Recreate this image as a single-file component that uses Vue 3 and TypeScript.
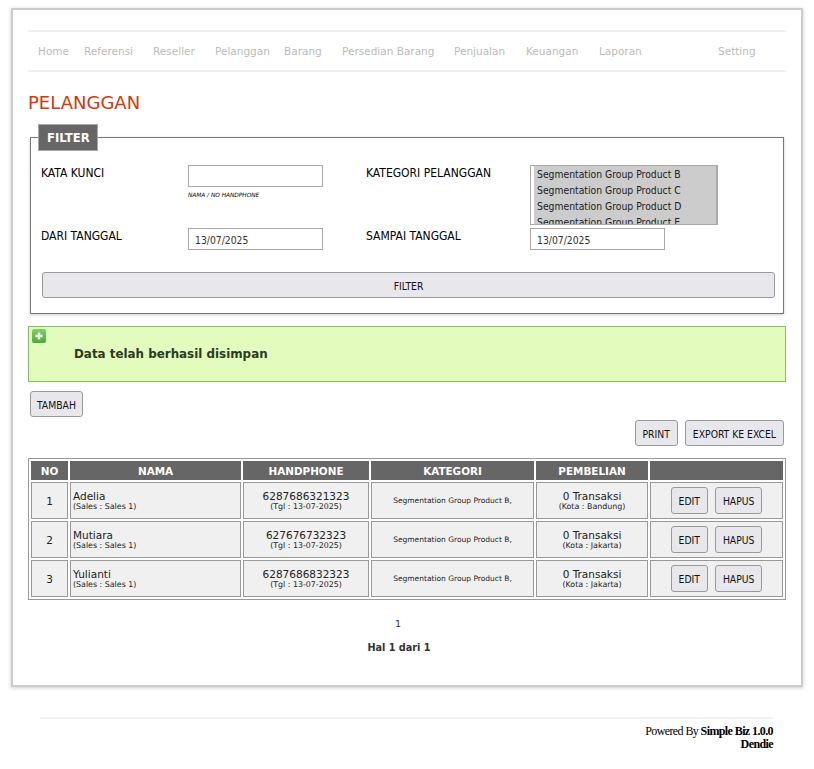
<script setup lang="ts">
type Customer = {
  no: number;
  nama: string;
  phone: string;
  kota: string;
};

const menu = [
  { label: 'Home', width: 46 },
  { label: 'Referensi', width: 69 },
  { label: 'Reseller', width: 62 },
  { label: 'Pelanggan', width: 69 },
  { label: 'Barang', width: 58 },
  { label: 'Persedian Barang', width: 112 },
  { label: 'Penjualan', width: 72 },
  { label: 'Keuangan', width: 73 },
  { label: 'Laporan', width: 119 },
  { label: 'Setting', width: 60 },
];

const categories = ['B', 'C', 'D', 'E'].map((c) => `Segmentation Group Product ${c}`);

const customers: Customer[] = [
  { no: 1, nama: 'Adelia', phone: '6287686321323', kota: 'Bandung' },
  { no: 2, nama: 'Mutiara', phone: '627676732323', kota: 'Jakarta' },
  { no: 3, nama: 'Yulianti', phone: '6287686832323', kota: 'Jakarta' },
];
</script>

<template>
  <div class="page">
    <div class="box">
      <nav class="menu">
        <a v-for="m in menu" :key="m.label" :style="{ width: m.width + 'px' }">{{ m.label }}</a>
      </nav>

      <h1>PELANGGAN</h1>

      <fieldset class="filter">
        <legend>FILTER</legend>
        <div class="form-grid">
          <label>KATA KUNCI</label>
          <div class="keyword">
            <input type="text" />
            <small>NAMA / NO HANDPHONE</small>
          </div>
          <label>KATEGORI PELANGGAN</label>
          <div class="list">
            <div v-for="c in categories" :key="c">{{ c }}</div>
          </div>
          <label>DARI TANGGAL</label>
          <input type="text" value="13/07/2025" />
          <label>SAMPAI TANGGAL</label>
          <input type="text" value="13/07/2025" />
        </div>
        <button class="btn wide">FILTER</button>
      </fieldset>

      <div class="message">
        <span class="msg-icon">
          <svg width="14" height="14" viewBox="0 0 14 14">
            <defs>
              <linearGradient id="msg-green" x1="0" y1="0" x2="0" y2="1">
                <stop offset="0" stop-color="#82cf68" />
                <stop offset="1" stop-color="#4fa83c" />
              </linearGradient>
            </defs>
            <rect width="14" height="14" rx="2" fill="url(#msg-green)" />
            <path d="M7 3.5v7M3.5 7h7" stroke="#eefbe4" stroke-width="2.4" />
          </svg>
        </span>
        Data telah berhasil disimpan
      </div>

      <div class="add-row"><button class="btn">TAMBAH</button></div>
      <div class="tools">
        <button class="btn">PRINT</button>
        <button class="btn">EXPORT KE EXCEL</button>
      </div>

      <table class="grid">
        <colgroup>
          <col style="width: 37px" />
          <col style="width: 171px" />
          <col style="width: 126px" />
          <col style="width: 163px" />
          <col style="width: 112px" />
          <col />
        </colgroup>
        <thead>
          <tr>
            <th>NO</th>
            <th>NAMA</th>
            <th>HANDPHONE</th>
            <th>KATEGORI</th>
            <th>PEMBELIAN</th>
            <th></th>
          </tr>
        </thead>
        <tbody>
          <tr v-for="c in customers" :key="c.no">
            <td class="center no">{{ c.no }}</td>
            <td class="name">
              {{ c.nama }}
              <small>(Sales : Sales 1)</small>
            </td>
            <td class="center">
              {{ c.phone }}
              <small>(Tgl : 13-07-2025)</small>
            </td>
            <td class="center cat">Segmentation Group Product B,</td>
            <td class="center">
              0 Transaksi
              <small>(Kota : {{ c.kota }})</small>
            </td>
            <td class="center actions">
              <button class="btn">EDIT</button>
              <button class="btn">HAPUS</button>
            </td>
          </tr>
        </tbody>
      </table>

      <div class="pager">1</div>
      <div class="pager-info">Hal 1 dari 1</div>
    </div>

    <footer>
      Powered By <b>Simple Biz 1.0.0</b><br />
      <b>Dendie</b>
    </footer>
  </div>
</template>

<style>
html,
body {
  background: #fff;
}
</style>

<style scoped>
.page {
  padding: 8px 11px 0;
  font-family: "DejaVu Sans", Verdana, sans-serif;
  color: #222;
}
.box {
  width: 792px;
  height: 679px;
  box-sizing: border-box;
  border: 2px solid #ccc;
  box-shadow: 0 1px 4px rgba(0, 0, 0, 0.2);
  padding: 20px 15px 0;
  background: #fff;
}
.menu {
  display: flex;
  height: 38px;
  align-items: center;
  border-top: 2px solid #f0f0f0;
  border-bottom: 2px solid #f0f0f0;
  padding-left: 10px;
  font-size: 10.5px;
  color: #bbb;
}
.menu a {
  flex: none;
  white-space: nowrap;
}
h1 {
  margin: 20px 0 0;
  font-size: 18px;
  line-height: 22px;
  font-weight: normal;
  color: #d4380d;
}
.filter {
  margin: 10px 2px 0;
  padding: 0 8px 0 10px;
  height: 190px;
  box-sizing: border-box;
  border: 1px solid #777;
  box-shadow: 0 1px 3px rgba(0, 0, 0, 0.2);
}
legend {
  margin-left: -3px;
  padding: 0 7px 0 8px;
  height: 27px;
  line-height: 27px;
  box-sizing: border-box;
  background: #666;
  border: 1px solid #aaa;
  color: #fff;
  font-size: 11.7px;
  font-weight: bold;
}
.form-grid {
  display: grid;
  grid-template-columns: 147px 178px 164px 1fr;
  grid-template-rows: 60px 25px;
  row-gap: 3px;
  margin-top: 14px;
  font-family: "DejaVu Sans Condensed", "DejaVu Sans", Verdana, sans-serif;
  font-stretch: condensed;
  font-size: 12px;
  color: #000;
}
.form-grid label {
  padding-top: 1px;
  line-height: 14px;
}
.form-grid input {
  width: 135px;
  height: 22px;
  box-sizing: border-box;
  border: 1px solid #aaa;
  padding: 3px 6px 1px;
  font-family: "DejaVu Sans Condensed", "DejaVu Sans", Verdana, sans-serif;
  font-stretch: condensed;
  font-size: 10.3px;
  color: #333;
  outline: none;
}
.keyword small {
  display: block;
  margin-top: 5px;
  font-family: "DejaVu Sans", Verdana, sans-serif;
  font-stretch: normal;
  font-size: 5.8px;
  font-style: italic;
}
.list {
  width: 188px;
  height: 60px;
  box-sizing: border-box;
  border: 1px solid #aaa;
  border-right-width: 2px;
  padding: 0 0 0 3px;
  overflow: hidden;
  font-size: 10.3px;
  line-height: 16px;
  color: #222;
}
.list div {
  background: #ccc;
  padding-left: 3px;
}
.btn {
  height: 26px;
  box-sizing: border-box;
  border: 1px solid #999;
  border-radius: 3px;
  background: #e8e8ec;
  padding: 1px 7px 0;
  font-family: "DejaVu Sans Condensed", "DejaVu Sans", Verdana, sans-serif;
  font-stretch: condensed;
  font-size: 10.3px;
  color: #111;
}
.wide {
  display: block;
  width: 733px;
  margin: 19px 0 0 1px;
}
.message {
  position: relative;
  margin-top: 12px;
  height: 56px;
  box-sizing: border-box;
  border: 1px solid #7cc45a;
  background: #e3fcbe;
  padding-left: 45px;
  line-height: 54px;
  font-size: 11.9px;
  font-weight: bold;
  color: #2b3a22;
}
.msg-icon {
  position: absolute;
  left: 3px;
  top: 2px;
  display: flex;
}
.add-row {
  margin: 9px 0 0 2px;
  display: flex;
}
.add-row .btn {
  padding: 1px 6px 0;
}
.tools {
  display: flex;
  justify-content: flex-end;
  gap: 7px;
  margin: 3px 2px 0 0;
}
.grid {
  width: 758px;
  margin-top: 12px;
  table-layout: fixed;
  border: 1px solid #999;
  border-spacing: 2px;
  font-size: 10.5px;
}
.grid th {
  height: 19px;
  padding: 0;
  background: #666;
  color: #fff;
  font-size: 10.4px;
  font-weight: bold;
}
.grid td {
  height: 35px;
  padding: 0;
  background: #f0f0f0;
  border: 1px solid #999;
  color: #222;
  line-height: 12px;
}
.grid small {
  display: block;
  font-size: 7.9px;
  line-height: 10px;
}
.center {
  text-align: center;
}
.grid .name {
  padding-left: 2px;
}
.grid .cat {
  font-size: 7.5px;
}
.actions .btn {
  height: 27px;
  margin: 0 3.5px;
}
.pager {
  margin-top: 18px;
  padding-right: 18px;
  text-align: center;
  font-size: 9.5px;
  line-height: 12px;
  color: #1a2f9f;
}
.pager-info {
  margin-top: 12px;
  padding-right: 16px;
  text-align: center;
  font-size: 9.7px;
  line-height: 12px;
  font-weight: bold;
  color: #333;
}
footer {
  margin: 30px 0 0 29px;
  border-top: 2px solid #f0f0f0;
  padding-top: 6px;
  text-align: right;
  font-family: "Liberation Serif", "Times New Roman", serif;
  font-size: 12px;
  letter-spacing: -0.6px;
  line-height: 13px;
  color: #000;
  width: 733px;
  box-sizing: border-box;
}
</style>
